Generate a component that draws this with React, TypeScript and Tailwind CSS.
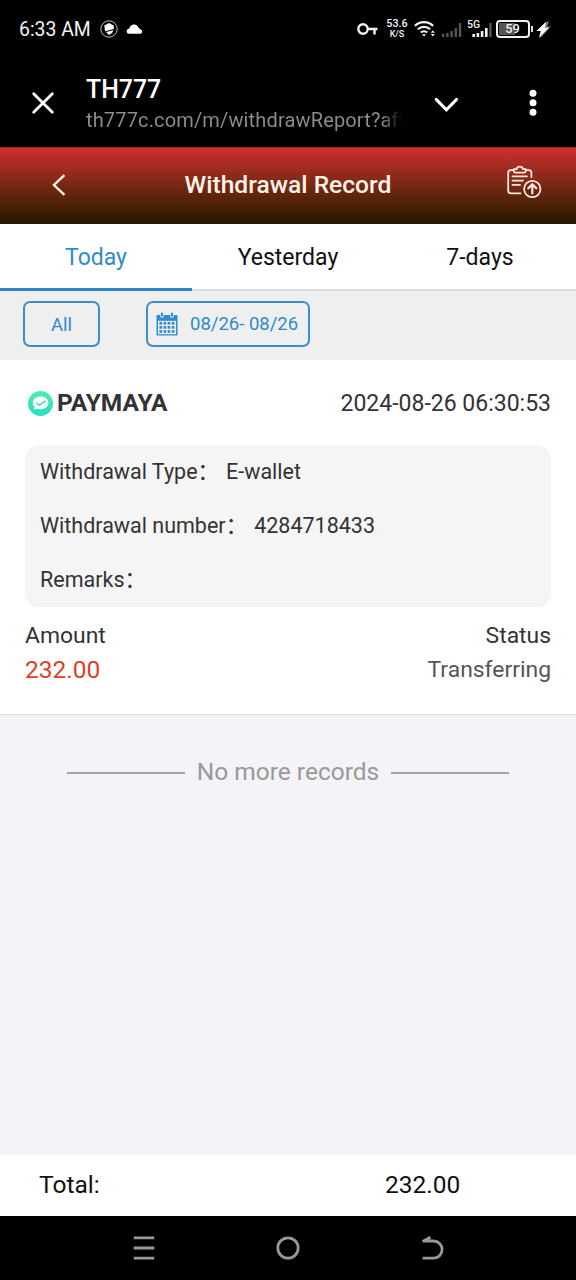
import { useState } from 'react';

interface WithdrawRecord {
  id: string;
  wallet: string;
  createdAt: string;
  type: string;
  remarks: string;
  amount: string;
  status: string;
}

const tabs = ['Today', 'Yesterday', '7-days'];

const records: WithdrawRecord[] = [
  {
    id: '4284718433',
    wallet: 'PAYMAYA',
    createdAt: '2024-08-26 06:30:53',
    type: 'E-wallet',
    remarks: '',
    amount: '232.00',
    status: 'Transferring',
  },
];

function StatusBar() {
  return (
    <div className="flex h-[58px] shrink-0 items-center pl-[19px] pr-[25px] text-[#f2f2f2]">
      <span className="w-[71px] whitespace-nowrap pt-[2px] text-[19.4px] leading-none">6:33 AM</span>
      <svg className="ml-[10px]" width="18" height="18" viewBox="0 0 18 18">
        <circle cx="9" cy="9" r="8.2" fill="none" stroke="#bdbdbd" strokeWidth="1" />
        <path d="M4.3 5.4 9 3l4.7 2.4.2 3.6-8.9 2.2z" fill="#fff" />
        <path d="M6 12.1 13.5 10.2 12 13 9 15z" fill="#fff" />
      </svg>
      <svg className="ml-[8px]" width="17" height="12" viewBox="0 0 17 12">
        <path d="M3.1 10.8a2.6 2.6 0 0 1-.6-5.1l1-.4a4.6 4.6 0 0 1 8.600-1.300l1 1.300 2 1.400a2.300 2.300 0 0 1-.6 4.100z" fill="#fff" />
      </svg>

      <div className="ml-auto flex items-center">
        <svg width="21" height="14" viewBox="0 0 21 14" fill="none" stroke="#f2f2f2" strokeWidth="2.4">
          <circle cx="6" cy="7" r="4.7" />
          <path d="M10.6 7H20.5M17.5 7v5.4" />
        </svg>
        <div className="ml-[8px] w-[22px] text-center font-medium leading-[10.5px]">
          <div className="text-[10.8px]">53.6</div>
          <div className="text-[9px]">K/S</div>
        </div>
        <svg className="ml-[6px]" width="22" height="18" viewBox="0 0 22 18" fill="none" stroke="#f2f2f2" strokeWidth="2.2">
          <path d="M.9 5.9a13 13 0 0 1 18.2 0M3.9 9.3a8.8 8.8 0 0 1 12.2 0M6.8 12.5a4.7 4.7 0 0 1 6.4 0" />
          <path d="M7.9 14.2h4.2L10 16.6z" fill="#f2f2f2" stroke="none" />
          <path d="m16.8 12.8 2-2.6 2 2.6zM16.8 14l2 2.6 2-2.6z" fill="#f2f2f2" stroke="none" />
        </svg>
        <svg className="ml-[6px] mt-[2px]" width="20" height="16" viewBox="0 0 20 16" fill="#555">
          <rect x="0" y="12" width="2.4" height="3" />
          <rect x="4.2" y="11" width="2.4" height="4" />
          <rect x="8.4" y="9" width="2.4" height="6" />
          <rect x="12.6" y="6" width="2.4" height="9" />
          <rect x="16.8" y="1" width="2.4" height="14" />
        </svg>
        <div className="relative ml-[5px] h-[18px] w-[25px]">
          <svg className="absolute left-0 top-[2px]" width="25" height="16" viewBox="0 0 25 16">
            <g fill="#f2f2f2">
              <rect x="5.4" y="12" width="2.6" height="3" />
              <rect x="9.6" y="11" width="2.6" height="4" />
              <rect x="13.8" y="9" width="2.6" height="6" />
              <rect x="18" y="6" width="2.6" height="9" />
            </g>
            <rect x="22.2" y="1" width="2.4" height="14" fill="#555" />
          </svg>
          <span className="absolute left-0 top-0 text-[10.5px] font-medium leading-none">5G</span>
        </div>
        <div className="ml-[4px] flex h-[18px] w-[34px] items-center rounded-[4px] border-2 border-[#f2f2f2] p-px">
          <div className="flex h-full w-full items-center justify-center bg-linear-to-r from-[#555] from-57% to-transparent to-57% pr-px text-[12.8px] font-medium leading-none">
            59
          </div>
        </div>
        <div className="ml-[1px] h-[6px] w-[2px] bg-[#ddd]" />
        <svg className="ml-[3px]" width="15" height="17" viewBox="0 0 15 17">
          <path d="M10.500.8 13 .6 11.300 5.600h3.500L5 16.500l-2-.3z" fill="#777" />
          <path d="M10.300.6.400 10h4.400L3 16.500 13 6.700H8.800z" fill="#fff" />
        </svg>
      </div>
    </div>
  );
}

function BrowserBar() {
  return (
    <div className="flex h-[89px] shrink-0 items-center text-white">
      <svg className="ml-[31px] shrink-0" width="24" height="24" viewBox="0 0 24 24" stroke="#fff" strokeWidth="2.8" strokeLinecap="round">
        <path d="m2.7 2.7 18.6 18.6M21.3 2.7 2.7 21.3" />
      </svg>
      <div className="ml-[31px] w-[326px] whitespace-nowrap">
        <div className="mt-[4px] text-[24.9px] font-medium leading-[30px]">TH777</div>
        <div className="bg-linear-to-r from-[#8e8e8e] from-91% to-black to-98% bg-clip-text text-[20px] leading-[30px] tracking-[0.15px] text-transparent">
          th777c.com/m/withdrawReport?aff
        </div>
      </div>
      <svg className="ml-[22px] mt-[4px] shrink-0" width="26" height="16" viewBox="0 0 26 16" fill="none" stroke="#fff" strokeWidth="3" strokeLinecap="round">
        <path d="m2.2 2.4 10.200 10.400L22.600 2.4" />
      </svg>
      <svg className="ml-[69px] shrink-0" width="8" height="28" viewBox="0 0 8 28" fill="#fff">
        <circle cx="4" cy="4.2" r="3.5" />
        <circle cx="4" cy="13.7" r="3.5" />
        <circle cx="4" cy="23.3" r="3.5" />
      </svg>
    </div>
  );
}

function PageHeader() {
  return (
    <header className="flex h-[77px] shrink-0 items-center justify-between border-t border-[#8a2a2a] bg-linear-to-b from-[#cf2e2e] to-[#261700] pb-[2px] pl-[52px] pr-[34px] text-[#fff3e8]">
      <button>
        <svg width="14" height="22" viewBox="0 0 14 22" fill="none" stroke="#fff3e8" strokeWidth="2.4">
          <path d="M12.4 1.2 2 11l10.4 9.8" />
        </svg>
      </button>
      <h1 className="ml-[4px] text-[24.6px] font-medium leading-none">Withdrawal Record</h1>
      <button>
        <svg className="-mt-[7px]" width="36" height="36" viewBox="0 0 36 36" fill="none" stroke="#ffe9dc" strokeWidth="1.8" strokeLinecap="round" strokeLinejoin="round">
          <path d="M7 6.2H4.9A2.7 2.7 0 0 0 2.2 8.9V26.6a2.7 2.7 0 0 0 2.7 2.7H14.5M20.5 6.2h2.2a2.7 2.7 0 0 1 2.7 2.7V13" />
          <path d="M7.8 5.2h2.7a3.4 3.4 0 0 1 6.6 0h2.7v1.6a1.8 1.8 0 0 1-1.8 1.8H9.6a1.8 1.8 0 0 1-1.8-1.8z" />
          <path d="M6.5 12.3H21M6.5 16.6H17M6.5 20.9H14" />
          <circle cx="26.3" cy="25" r="8.2" />
          <path d="M26.3 29.5V20.5M22.3 24.2l4-4 4 4" strokeWidth="2.2" />
        </svg>
      </button>
    </header>
  );
}

function CalendarIcon() {
  return (
    <svg width="22" height="24" viewBox="0 0 22 24">
      <path d="M1.5 3h19a1 1 0 0 1 1 1v18.5a1 1 0 0 1-1 1h-19a1 1 0 0 1-1-1V4a1 1 0 0 1 1-1z" fill="#2f8bcb" />
      <path d="M2 8.8h18v13.4H2z" fill="#efefef" />
      <path d="M4.2 1.5h3.4v4H4.2zM14.2 1.5h3.4v4h-3.4z" fill="#efefef" />
      <rect x="4.9" y="0.5" width="2" height="4.2" rx="1" fill="#2f8bcb" />
      <rect x="14.9" y="0.5" width="2" height="4.2" rx="1" fill="#2f8bcb" />
      {[9.9, 14, 18.1].map((y) =>
        [3.4, 7.5, 11.6, 15.7].map((x) => (
          <rect key={`${x}-${y}`} x={x} y={y} width="2.7" height="2.7" fill="#2f8bcb" />
        ))
      )}
    </svg>
  );
}

function DetailRow({ label, value }: { label: string; value: string }) {
  return (
    <div className="flex h-[54px] items-center gap-[7px] whitespace-nowrap text-[21.5px]">
      <span>{label}：</span>
      <span>{value}</span>
    </div>
  );
}

function RecordCard({ record }: { record: WithdrawRecord }) {
  return (
    <div className="h-[355px] shrink-0 border-b border-[#dcdcde] bg-white px-[25px] text-[#333]">
      <div className="flex h-[85px] items-center justify-between pt-[2px]">
        <div className="flex items-center">
          <svg className="ml-[3px]" width="25" height="25" viewBox="0 0 25 25">
            <defs>
              <linearGradient id="wallet" x1="0" y1="0" x2="0" y2="1">
                <stop offset="0" stopColor="#4df0a8" />
                <stop offset="1" stopColor="#27dcc8" />
              </linearGradient>
            </defs>
            <circle cx="12.5" cy="12.5" r="12.5" fill="url(#wallet)" />
            <path d="M12.7 5.5c4.5 0 7.7 2.6 7.7 6.2s-3.3 6.500-7.900 6.500c-1.200 0-2.300-.2-3.200-.5l-3.500.9.900-2.500a5.800 5.800 0 0 1-1.900-4.200c0-3.700 3.400-6.400 7.900-6.400z" fill="#fff" />
            <path d="m8.800 12.100 2.400 2.200 6.400-4.600" fill="none" stroke="#39dfb4" strokeWidth="1.5" />
          </svg>
          <span className="ml-[4px] text-[24.5px] font-bold leading-none">{record.wallet}</span>
        </div>
        <span className="text-[23px] leading-none">{record.createdAt}</span>
      </div>
      <div className="h-[162px] rounded-[14px] bg-[#f5f5f5] pl-[15px]">
        <DetailRow label="Withdrawal Type" value={record.type} />
        <DetailRow label="Withdrawal number" value={record.id} />
        <DetailRow label="Remarks" value={record.remarks} />
      </div>
      <div className="flex justify-between pt-[12px] text-[22.9px] leading-[34px]">
        <div>
          <div>Amount</div>
          <div className="text-[24.5px] text-[#df3f26]">{record.amount}</div>
        </div>
        <div className="text-right">
          <div>Status</div>
          <div className="text-[#555]">{record.status}</div>
        </div>
      </div>
    </div>
  );
}

export default function App() {
  const [activeTab, setActiveTab] = useState('Today');

  return (
    <div className="flex h-[1280px] w-[576px] flex-col overflow-hidden bg-black font-['Roboto','Noto_Sans_CJK_SC',sans-serif]">
      <StatusBar />
      <BrowserBar />
      <PageHeader />

      <nav className="grid h-[67px] shrink-0 grid-cols-3 bg-white text-[23px]">
        {tabs.map((tab) => (
          <button
            key={tab}
            onClick={() => setActiveTab(tab)}
            className={
              tab === activeTab
                ? 'border-b-[3px] border-[#2f86c6] pt-[5px] text-[#2f8bcb]'
                : 'border-b-2 border-[#dedede] pb-px pt-[5px] text-[#111]'
            }
          >
            {tab}
          </button>
        ))}
      </nav>

      <main className="flex min-h-0 flex-1 flex-col bg-[#f3f3f8]">
        <div className="flex h-[69px] shrink-0 items-start bg-[#efefef] pl-[23px] pt-[10px] text-[#2f8bcb]">
          <button className="h-[46px] w-[77px] rounded-[7px] border-2 border-[#3d8fcb] pt-[3px] text-[18.5px]">All</button>
          <button className="ml-[46px] flex h-[46px] w-[164px] items-center rounded-[7px] border-2 border-[#3d8fcb] pl-[8px] text-[18.5px]">
            <CalendarIcon />
            <span className="ml-[12px] whitespace-nowrap pt-px">08/26- 08/26</span>
          </button>
        </div>

        {records.map((record) => (
          <RecordCard key={record.id} record={record} />
        ))}

        <div className="mt-[41px] flex items-center justify-center gap-[12px] text-[24.5px] leading-[32px] text-[#999]">
          <span className="mt-[2px] h-[2px] w-[118px] bg-[#a3a3a8]" />
          No more records
          <span className="mt-[2px] h-[2px] w-[118px] bg-[#a3a3a8]" />
        </div>
      </main>

      <footer className="flex h-[61px] shrink-0 items-center bg-white pl-[39px] text-[24.5px] text-[#111]">
        <span className="w-[346px]">Total:</span>
        <span>232.00</span>
      </footer>

      <div className="flex h-[64px] shrink-0 items-center justify-center gap-[120px]">
        <svg width="24" height="24" viewBox="0 0 24 24" stroke="#999" strokeWidth="2.8">
          <path d="M1.7 1.8h20.6M1.7 12h20.6M1.7 22.2h20.6" />
        </svg>
        <svg width="24" height="24" viewBox="0 0 24 24" fill="none" stroke="#999" strokeWidth="2.8">
          <circle cx="12" cy="12" r="10.2" />
        </svg>
        <svg width="24" height="24" viewBox="0 0 24 24" fill="none" stroke="#999" strokeWidth="2.8" strokeLinejoin="round">
          <path d="M10.5 1.2 3.6 5H13.5a8.6 8.6 0 0 1 0 17.2H2.6" />
        </svg>
      </div>
    </div>
  );
}
